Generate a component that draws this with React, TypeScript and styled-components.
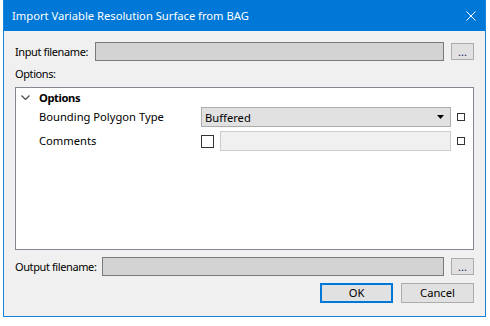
import React from "react";
import styled, { createGlobalStyle } from "styled-components";

const GlobalStyle = createGlobalStyle`
  html, body { margin: 0; padding: 0; background: #ffffff; }
  body {
    font-family: "Noto Sans", "Open Sans", sans-serif;
    font-size: 11.2px;
    color: #000;
  }
  * { box-sizing: border-box; }
`;

const Window = styled.div`
  margin-left: 3px;
  width: 483px;
  height: 317px;
  border: 1px solid #1883d7;
  border-top: none;
  background: #f0f0f0;
  display: flex;
  flex-direction: column;
`;

const TitleBar = styled.div`
  height: 31px;
  flex: none;
  background: #0078d7;
  display: flex;
  align-items: center;
  justify-content: space-between;
  padding: 0 9px 0 8px;
  color: #ffffff;
`;

const Title = styled.span`
  font-size: 11.2px;
  line-height: 16px;
`;

const CloseIcon = styled.svg`
  display: block;
  width: 10px;
  height: 10px;
`;

const Body = styled.div`
  flex: 1;
  display: flex;
  flex-direction: column;
  padding: 11px 11px 0 11px;
`;

const FileRow = styled.div<{ $labelWidth: number; $mt?: number }>`
  display: grid;
  grid-template-columns: ${(p) => p.$labelWidth}px 1fr 23px;
  column-gap: 7px;
  align-items: center;
  height: 19px;
  margin-top: ${(p) => p.$mt ?? 0}px;
`;

const Label = styled.span`
  font-size: 11px;
  letter-spacing: -0.4px;
  line-height: 16px;
  white-space: nowrap;
`;

const FieldBox = styled.div`
  height: 19px;
  background: #d3d3d3;
  border: 1px solid #7a7a7a;
`;

const BrowseButton = styled.div`
  height: 17px;
  background: #e1e1e1;
  border: 1px solid #adadad;
  display: flex;
  align-items: center;
  justify-content: center;
  line-height: 14px;
  color: #1a1a60;
`;

const SectionLabel = styled.div`
  margin-top: 5px;
  font-size: 11px;
  letter-spacing: -0.4px;
  line-height: 16px;
`;

const TreePanel = styled.div`
  margin-top: 5px;
  height: 163px;
  border: 1px solid #828790;
  background: #ffffff;
`;

const GroupHeader = styled.div`
  height: 19px;
  display: flex;
  align-items: center;
  padding-left: 5px;
  font-weight: bold;
  letter-spacing: -0.4px;
`;

const Chevron = styled.svg`
  display: block;
  width: 9px;
  height: 5px;
  margin-right: 9px;
`;

const PropGrid = styled.div`
  display: grid;
  grid-template-columns: 156px 250px 8px;
  grid-auto-rows: 20px;
  column-gap: 6px;
  row-gap: 4px;
  align-items: center;
  padding-left: 23px;
`;

const PropLabel = styled.span`
  line-height: 16px;
  white-space: nowrap;
`;

const Combo = styled.div`
  height: 20px;
  display: flex;
  align-items: center;
  justify-content: space-between;
  padding: 0 6px 0 3px;
  background: #e1e1e1;
  border: 1px solid #adadad;
`;

const ComboArrow = styled.svg`
  display: block;
  width: 7px;
  height: 4px;
`;

const ValueCell = styled.div`
  display: flex;
  align-items: center;
  gap: 6px;
  height: 20px;
`;

const CheckBox = styled.div<{ $size: number }>`
  flex: none;
  width: ${(p) => p.$size}px;
  height: ${(p) => p.$size}px;
  border: 1px solid #333333;
  background: #ffffff;
`;

const TextField = styled.div`
  flex: 1;
  height: 20px;
  background: #f0f0f0;
  border: 1px solid #cccccc;
`;

const ButtonRow = styled.div`
  margin-top: 7px;
  display: flex;
  justify-content: flex-end;
  gap: 8px;
`;

const DialogButton = styled.div<{ $default?: boolean }>`
  width: 73px;
  height: 20px;
  display: flex;
  align-items: center;
  justify-content: center;
  background: #e1e1e1;
  border: ${(p) => (p.$default ? "2px solid #0078d7" : "1px solid #adadad")};
  line-height: 16px;
`;

export default function App() {
  return (
    <>
      <GlobalStyle />
      <Window>
        <TitleBar>
          <Title>Import Variable Resolution Surface from BAG</Title>
          <CloseIcon viewBox="0 0 10 10">
            <path d="M0.5 0.5 L9.5 9.5 M9.5 0.5 L0.5 9.5" stroke="#ffffff" strokeWidth="1" fill="none" />
          </CloseIcon>
        </TitleBar>
        <Body>
          <FileRow $labelWidth={73}>
            <Label>Input filename:</Label>
            <FieldBox />
            <BrowseButton>...</BrowseButton>
          </FileRow>
          <SectionLabel>Options:</SectionLabel>
          <TreePanel>
            <GroupHeader>
              <Chevron viewBox="0 0 9 5">
                <polyline points="0.5,0.5 4.5,4.5 8.5,0.5" stroke="#4a4a4a" strokeWidth="1.2" fill="none" />
              </Chevron>
              Options
            </GroupHeader>
            <PropGrid>
              <PropLabel>Bounding Polygon Type</PropLabel>
              <Combo>
                <span>Buffered</span>
                <ComboArrow viewBox="0 0 7 4">
                  <polygon points="0,0 7,0 3.5,4" fill="#000000" />
                </ComboArrow>
              </Combo>
              <CheckBox $size={8} />
              <PropLabel>Comments</PropLabel>
              <ValueCell>
                <CheckBox $size={13} />
                <TextField />
              </ValueCell>
              <CheckBox $size={8} />
            </PropGrid>
          </TreePanel>
          <FileRow $labelWidth={80} $mt={7}>
            <Label>Output filename:</Label>
            <FieldBox />
            <BrowseButton>...</BrowseButton>
          </FileRow>
          <ButtonRow>
            <DialogButton $default>OK</DialogButton>
            <DialogButton>Cancel</DialogButton>
          </ButtonRow>
        </Body>
      </Window>
    </>
  );
}
